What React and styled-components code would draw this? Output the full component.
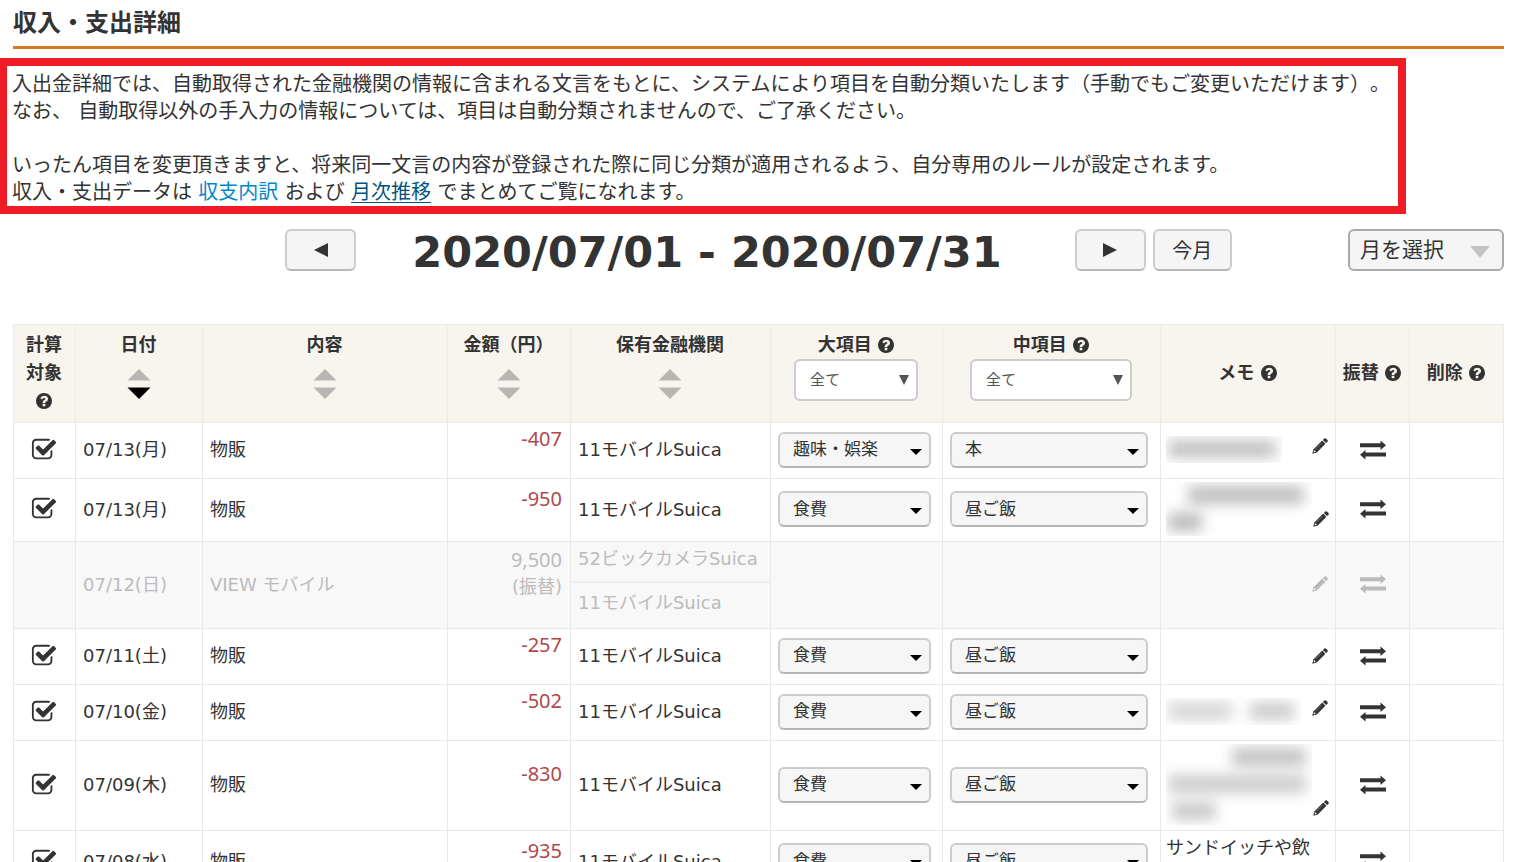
import styled, { createGlobalStyle, css } from "styled-components";
import { useState } from "react";

const rows = [
  {
    date: "07/13(月)",
    content: "物販",
    amount: "-407",
    bank: "11モバイルSuica",
    large: "趣味・娯楽",
    middle: "本",
    masked: { width: 116, lines: [[2, 108, 0.45]] },
  },
  {
    date: "07/13(月)",
    content: "物販",
    amount: "-950",
    bank: "11モバイルSuica",
    large: "食費",
    middle: "昼ご飯",
    masked: { width: 146, lines: [[22, 116, 0.48], [2, 34, 0.5]] },
  },
  {
    date: "07/12(日)",
    content: "VIEW モバイル",
    amount: "9,500",
    transfer: ["52ビックカメラSuica", "11モバイルSuica"],
  },
  {
    date: "07/11(土)",
    content: "物販",
    amount: "-257",
    bank: "11モバイルSuica",
    large: "食費",
    middle: "昼ご飯",
  },
  {
    date: "07/10(金)",
    content: "物販",
    amount: "-502",
    bank: "11モバイルSuica",
    large: "食費",
    middle: "昼ご飯",
    masked: { width: 136, lines: [[2, 64, 0.3], [84, 44, 0.38]], inline: true },
  },
  {
    date: "07/09(木)",
    content: "物販",
    amount: "-830",
    bank: "11モバイルSuica",
    large: "食費",
    middle: "昼ご飯",
    masked: { width: 146, lines: [[66, 74, 0.45], [2, 138, 0.38], [6, 44, 0.4]] },
  },
  {
    date: "07/08(水)",
    content: "物販",
    amount: "-935",
    bank: "11モバイルSuica",
    large: "食費",
    middle: "昼ご飯",
    memo: "サンドイッチや飲み物",
  },
];

const CheckIcon = () => (
  <svg width="26" height="26" viewBox="0 0 1792 1792" fill="currentColor" aria-hidden="true">
    <path d="M1472 930v318q0 119-84.5 203.5t-203.5 84.5h-832q-119 0-203.5-84.5t-84.5-203.5v-832q0-119 84.5-203.5t203.5-84.5h832q63 0 117 25 15 7 18 23 3 17-9 29l-49 49q-10 10-23 10-3 0-9-2-23-6-45-6h-832q-66 0-113 47t-47 113v832q0 66 47 113t113 47h832q66 0 113-47t47-113v-254q0-13 9-22l64-64q10-10 23-10 6 0 12 3 20 8 20 29zm231-489l-814 814q-24 24-57 24t-57-24l-430-430q-24-24-24-57t24-57l110-110q24-24 57-24t57 24l263 263 647-647q24-24 57-24t57 24l110 110q24 24 24 57t-24 57z" />
  </svg>
);

const HelpIcon = () => (
  <HelpSvg viewBox="128 128 1536 1536" fill="currentColor" aria-hidden="true">
    <path d="M1024 1376v-192q0-14-9-23t-23-9h-192q-14 0-23 9t-9 23v192q0 14 9 23t23 9h192q14 0 23-9t9-23zm256-672q0-88-55.5-163t-138.5-116-170-41q-243 0-371 213-15 24 8 42l132 100q7 6 19 6 16 0 25-12 53-68 86-92 34-24 86-24 48 0 85.5 26t37.5 59q0 38-20 61t-68 45q-63 28-115.5 86.5t-52.5 125.5v36q0 14 9 23t23 9h192q14 0 23-9t9-23q0-19 21.5-49.5t54.5-49.5q32-18 49-28.5t46-35 44.5-48 28-60.5 12.5-81zm384 192q0 209-103 385.5t-279.5 279.5-385.5 103-385.5-103-279.5-279.5-103-385.5 103-385.5 279.5-279.5 385.5-103 385.5 103 279.5 279.5 103 385.5z" />
  </HelpSvg>
);

const PencilIcon = () => (
  <svg width="18" height="18" viewBox="0 0 18 18" fill="currentColor" aria-hidden="true">
    <path d="M11.2 3.6L14.4 6.8L5.8 15.4L1.2 16.8L2.6 12.2Z" />
    <path d="M11.9 2.9L13.3 1.5Q14.1 0.8 14.9 1.5L16.5 3.1Q17.2 3.9 16.5 4.7L15.1 6.1Z" />
    <path d="M4.6 12.2L10.6 6.2" stroke="#999" strokeWidth="0.6" />
    <circle cx="3.6" cy="14.3" r="0.9" fill="#fff" />
  </svg>
);

const TransferIcon = () => (
  <svg width="26" height="20" viewBox="0 0 26 20" fill="currentColor" aria-hidden="true">
    <path d="M0 3.2H20.5V0.5L26 5.3L20.5 10V7.2H0Z" />
    <path d="M26 12.6H5.5V10L0 14.7L5.5 19.5V16.6H26Z" />
  </svg>
);

const SortIcon = ({ desc }) => (
  <svg width="24" height="30" viewBox="0 0 24 30" aria-hidden="true">
    <path d="M12 0L23.5 11.5H0.5Z" fill="#b8b6b5" />
    <path d="M12 30L23.5 18.5H0.5Z" fill={desc ? "#000" : "#b8b6b5"} />
  </svg>
);

const SortHead = ({ label, desc }) => (
  <HeadCell top>
    {label}
    <SortButton type="button" aria-label={`${label}で並べ替え`}>
      <SortIcon desc={desc} />
    </SortButton>
  </HeadCell>
);

const FilterHead = ({ id, label, wide }) => (
  <HeadCell top>
    <label htmlFor={id}>{label}</label> <HelpIcon />
    <FilterWrap wide={wide}>
      <FilterSelect id={id}>
        <option>全て</option>
      </FilterSelect>
    </FilterWrap>
  </HeadCell>
);

const CategorySelect = ({ label, value, wide }) => (
  <CategoryWrap wide={wide}>
    <Category aria-label={label} defaultValue={value}>
      <option>{value}</option>
    </Category>
  </CategoryWrap>
);

const MaskedMemo = ({ width, lines, inline }) => (
  <Masked width={width} rows={inline ? 1 : lines.length} aria-label="非表示のメモ">
    {lines.map(([left, w, alpha], i) => (
      <Smudge key={i} left={left} width={w} row={inline ? 0 : i} alpha={alpha} />
    ))}
  </Masked>
);

const DetailRow = ({ row }) => {
  const [checked, setChecked] = useState(true);
  const muted = Boolean(row.transfer);

  return (
    <Row muted={muted}>
      <CheckCell>
        {!muted && (
          <Check>
            <input
              type="checkbox"
              aria-label={`${row.date} を計算対象にする`}
              checked={checked}
              onChange={() => setChecked(!checked)}
            />
            <CheckIcon />
          </Check>
        )}
      </CheckCell>
      <Cell>{row.date}</Cell>
      <Cell>{row.content}</Cell>
      <AmountCell muted={muted}>
        {row.amount}
        {muted && <Note>(振替)</Note>}
      </AmountCell>
      {muted ? (
        <TransferCell>
          <From>{row.transfer[0]}</From>
          <To>{row.transfer[1]}</To>
        </TransferCell>
      ) : (
        <Cell>{row.bank}</Cell>
      )}
      <Cell>{!muted && <CategorySelect label="大項目" value={row.large} />}</Cell>
      <Cell>{!muted && <CategorySelect label="中項目" value={row.middle} wide />}</Cell>
      <MemoCell>
        <Memo>
          {row.masked && <MaskedMemo {...row.masked} />}
          {row.memo && <MemoText>{row.memo}</MemoText>}
          <EditButton type="button" aria-label="メモを編集" raised={Boolean(row.masked || row.memo)}>
            <PencilIcon />
          </EditButton>
        </Memo>
      </MemoCell>
      <Cell>
        <IconButton type="button" aria-label="振替">
          <TransferIcon />
        </IconButton>
      </Cell>
      <Cell />
    </Row>
  );
};

export default function App() {
  return (
    <>
      <GlobalStyle />
      <Page>
        <Title>収入・支出詳細</Title>
        <Notice>
          入出金詳細では、自動取得された金融機関の情報に含まれる文言をもとに、システムにより項目を自動分類いたします（手動でもご変更いただけます）。
          <br />
          なお、 自動取得以外の手入力の情報については、項目は自動分類されませんので、ご了承ください。
          <br />
          <br />
          いったん項目を変更頂きますと、将来同一文言の内容が登録された際に同じ分類が適用されるよう、自分専用のルールが設定されます。
          <br />
          収入・支出データは <Link href="#breakdown">収支内訳</Link> および{" "}
          <Link href="#trend" active>
            月次推移
          </Link>{" "}
          でまとめてご覧になれます。
        </Notice>

        <Period>
          <PeriodNav>
            <NavButton type="button" aria-label="前の月">
              <Arrow viewBox="0 0 14 14">
                <path d="M14 0V14L0 7Z" />
              </Arrow>
            </NavButton>
            <Range>2020/07/01 - 2020/07/31</Range>
            <NavButton type="button" aria-label="次の月">
              <Arrow viewBox="0 0 14 14">
                <path d="M0 0V14L14 7Z" />
              </Arrow>
            </NavButton>
            <TodayButton type="button">今月</TodayButton>
          </PeriodNav>
          <MonthWrap>
            <MonthSelect aria-label="月を選択">
              <option>月を選択</option>
            </MonthSelect>
          </MonthWrap>
        </Period>

        <Table>
          <colgroup>
            <Col width={62} />
            <Col width={127} />
            <col />
            <Col width={123} />
            <Col width={200} />
            <Col width={172} />
            <Col width={218} />
            <Col width={175} />
            <Col width={74} />
            <Col width={94} />
          </colgroup>
          <thead>
            <HeadRow>
              <HeadCell>
                計算
                <br />
                対象
                <br />
                <HelpIcon />
              </HeadCell>
              <SortHead label="日付" desc />
              <SortHead label="内容" />
              <SortHead label="金額（円）" />
              <SortHead label="保有金融機関" />
              <FilterHead id="large" label="大項目" />
              <FilterHead id="middle" label="中項目" wide />
              <HeadCell>
                メモ <HelpIcon />
              </HeadCell>
              <HeadCell>
                振替 <HelpIcon />
              </HeadCell>
              <HeadCell>
                削除 <HelpIcon />
              </HeadCell>
            </HeadRow>
          </thead>
          <tbody>
            {rows.map((row, i) => (
              <DetailRow key={i} row={row} />
            ))}
          </tbody>
        </Table>
      </Page>
    </>
  );
}

const GlobalStyle = createGlobalStyle`
  * {
    box-sizing: border-box;
  }
  body {
    margin: 0;
    background: #fff;
    color: #333;
    font-family: "DejaVu Sans", "Noto Sans CJK JP", sans-serif;
    font-size: 18px;
    line-height: 27px;
    text-spacing-trim: space-all;
  }
  button, select {
    margin: 0;
    color: inherit;
    font-family: inherit;
    cursor: pointer;
  }
`;

const Page = styled.main`
  padding: 0 12px 0 13px;
  overflow: hidden;
`;

const Title = styled.h1`
  margin: 0 0 9px;
  padding-bottom: 4px;
  border-bottom: 3px solid #d87a1f;
  font-family: "Noto Sans CJK JP", sans-serif;
  font-size: 24px;
  line-height: 42px;
`;

// the left edge runs just past the window
const Notice = styled.p`
  width: fit-content;
  margin: 0 0 0 -14px;
  padding: 5px 8px 0 5px;
  border: 8px solid #ee1c25;
  font-size: 20px;
`;

const Link = styled.a`
  color: ${({ active }) => (active ? "#005580" : "#0088cc")};
  text-decoration: ${({ active }) => (active ? "underline 1px" : "none")};
  text-underline-offset: 3px;
`;

const Period = styled.div`
  display: grid;
  grid-template-columns: 1fr auto 1fr;
  align-items: center;
  margin: 15px 0 53px;
`;

const PeriodNav = styled.div`
  display: flex;
  align-items: center;
  grid-column: 2;
`;

const Range = styled.h2`
  margin: 0 73px 0 56px;
  padding-top: 4px;
  font-size: 43px;
  line-height: 38px;
  white-space: nowrap;
`;

const buttonBox = css`
  height: 42px;
  border: 2px solid #ccc;
  border-bottom-color: #b8b8b8;
  border-radius: 6px;
  background: #f5f5f5;
  font-size: 20px;
`;

const NavButton = styled.button`
  ${buttonBox}
  display: grid;
  place-items: center;
  width: 71px;
`;

const TodayButton = styled.button`
  ${buttonBox}
  width: 79px;
  margin-left: 7px;
  padding: 0 0 2px;
`;

const Arrow = styled.svg`
  width: 14px;
  height: 14px;
  fill: #333;
`;

const MonthWrap = styled.div`
  position: relative;
  justify-self: end;
  &::after {
    content: "";
    position: absolute;
    top: 17px;
    right: 14px;
    border: 10px solid transparent;
    border-top: 12px solid #c4c4c7;
    border-bottom: 0;
    pointer-events: none;
  }
`;

const MonthSelect = styled.select`
  ${buttonBox}
  display: block;
  width: 156px;
  padding: 0 10px;
  border-color: #aaa;
  appearance: none;
  font-size: 21px;
`;

const Table = styled.table`
  width: 100%;
  border-collapse: collapse;
  table-layout: fixed;
`;

const Col = styled.col`
  width: ${({ width }) => width}px;
`;

const HeadRow = styled.tr`
  height: 98px;
  background: #f8f5ee;
`;

const HeadCell = styled.th`
  padding: ${({ top }) => (top ? "6px 1px 4px 0" : "4px 1px 6px 0")};
  border: 1px solid #ebebe8;
  line-height: 28px;
  vertical-align: ${({ top }) => (top ? "top" : "middle")};
  white-space: nowrap;
`;

const HelpSvg = styled.svg`
  width: 16px;
  height: 16px;
  vertical-align: -2px;
`;

const SortButton = styled.button`
  display: block;
  height: 30px;
  margin: 10px auto 0;
  padding: 0;
  border: 0;
  background: none;
`;

const FilterWrap = styled.div`
  position: relative;
  width: ${({ wide }) => (wide ? 162 : 124)}px;
  margin: 0 auto;
  &::after {
    content: "";
    position: absolute;
    top: 16px;
    right: 9px;
    border: 5px solid transparent;
    border-top: 10px solid #555;
    border-bottom: 0;
    pointer-events: none;
  }
`;

const FilterSelect = styled.select`
  display: block;
  width: 100%;
  height: 42px;
  padding: 0 14px;
  border: 2px solid #ccc;
  border-radius: 6px;
  background: #fff;
  appearance: none;
  color: #555;
  font-size: 15px;
`;

const Row = styled.tr`
  height: 56px;
  ${({ muted }) =>
    muted &&
    css`
      background: #f8f8f8;
      color: #bbb;
    `}
`;

const Cell = styled.td`
  padding: 3px 7px 5px;
  border: 1px solid #e8e8e8;
`;

const CheckCell = styled(Cell)`
  padding: 4px 9px 4px 7px;
`;

const AmountCell = styled(Cell)`
  padding: 2px 8px 26px;
  color: ${({ muted }) => (muted ? "inherit" : "#b0484b")};
  font-family: "Noto Sans", "Noto Sans CJK JP", sans-serif;
  font-size: 20px;
  text-align: right;
`;

const Note = styled.div`
  font-family: "DejaVu Sans", "Noto Sans CJK JP", sans-serif;
  font-size: 18px;
`;

const TransferCell = styled(Cell)`
  padding: 0;
`;

const From = styled.div`
  padding: 3px 7px 9px;
  border-bottom: 2px solid #eee;
`;

const To = styled.div`
  padding: 6px 7px 12px;
`;

const Check = styled.label`
  position: relative;
  display: block;
  height: 28px;
  input {
    position: absolute;
    inset: 0;
    margin: auto;
    opacity: 0;
    cursor: pointer;
  }
  svg {
    display: block;
    margin: 0 auto;
  }
  input:not(:checked) + svg {
    opacity: 0.3;
  }
`;

const CategoryWrap = styled.div`
  position: relative;
  max-width: ${({ wide }) => (wide ? 198 : 153)}px;
  &::after {
    content: "";
    position: absolute;
    top: 17px;
    right: 9px;
    border: 6px solid transparent;
    border-top-color: #000;
    border-bottom: 0;
    pointer-events: none;
  }
`;

const Category = styled.select`
  display: block;
  width: 100%;
  height: 36px;
  padding: 0 13px 1px;
  border: 2px solid #ccc;
  border-bottom-color: #b5b5b5;
  border-radius: 6px;
  background: #f6f6f6;
  appearance: none;
  font-size: 17px;
`;

const MemoCell = styled(Cell)`
  padding-right: 6px;
  padding-left: 5px;
`;

const Memo = styled.div`
  display: flex;
  align-items: flex-end;
`;

const MemoText = styled.span`
  width: 146px;
`;

const Masked = styled.div`
  position: relative;
  flex: none;
  width: ${({ width }) => width}px;
  height: ${({ rows }) => rows * 27}px;
  overflow: hidden;
`;

const Smudge = styled.span`
  position: absolute;
  top: ${({ row }) => row * 27 + 4}px;
  left: ${({ left }) => left}px;
  width: ${({ width }) => width}px;
  height: 18px;
  background: rgba(120, 120, 120, ${({ alpha }) => alpha});
  filter: blur(7px);
`;

const IconButton = styled.button`
  display: block;
  margin: 0 auto;
  padding: 0;
  border: 0;
  background: none;
  svg {
    display: block;
  }
`;

const EditButton = styled(IconButton)`
  display: flex;
  align-items: center;
  height: 27px;
  margin: 0 0 0 auto;
  padding-bottom: ${({ raised }) => (raised ? 8 : 0)}px;
`;
